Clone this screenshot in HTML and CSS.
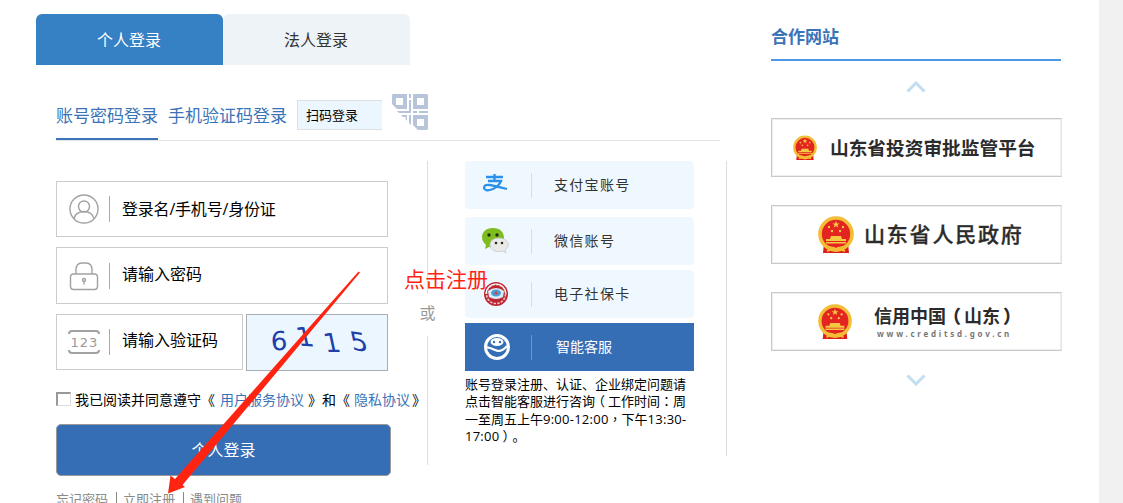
FILE: index.html
```html
<!DOCTYPE html>
<html lang="zh-CN">
<head>
<meta charset="utf-8">
<title>个人登录</title>
<link rel="stylesheet" href="styles.css">
</head>
<body>
<svg width="0" height="0" class="defs">
  <symbol id="emblem" viewBox="0 0 36 38">
    <path d="M6 27h24l1 10H5z" fill="#e01b19"/>
    <circle cx="18" cy="18" r="16" fill="#e42420" stroke="#f3bd36" stroke-width="3.6"/>
    <path d="M18 5l1 2.5h2.6l-2.1 1.6.8 2.6-2.3-1.600-2.300 1.600.8-2.600-2.100-1.600H17z" fill="#f5c842"/>
    <g fill="#f5c842"><circle cx="11" cy="11" r="1.200"/><circle cx="25" cy="11" r="1.200"/><circle cx="14" cy="15" r="1.200"/><circle cx="22" cy="15" r="1.200"/><path d="M13 20h10l1 3h4v2H8v-2h4zM8 26h20v1.500H8z"/></g>
    <path d="M7 29c5 4 7 1 11 4 4-3 6 0 11-4M9 35l5-2 4 2 4-2 5 2" fill="none" stroke="#f3bd36" stroke-width="2"/>
  </symbol>
</svg>
<div class="page">
  <main class="main">
    <div class="tabs"><div class="tab active">个人登录</div><div class="tab">法人登录</div></div>
    <nav class="modes">
      <a class="mode selected">账号密码登录</a><a class="mode">手机验证码登录</a>
      <span class="scan">扫码登录</span>
      <svg class="qr" width="36" height="36" viewBox="0 0 36 36">
        <g fill="#b7c4da"><path fill-rule="evenodd" d="M1 0h14v15H5l-5-5V1zM4 4v7h7V4zM21 0h14l1 1v14H21zM25 4v7h7V4zM21 21h15v14l-1 1H26l-5-5zM25 25v7h7v-7z"/>
        <path d="M17 0h2v4h-2zM17 6h2v13H7l-2-2h12zM21 17h4v2h-4zM27 17h9v2h-9zM9 21h6v2h-4zM13 24l2-1v4zM17 21h2v10l-2-2z"/></g>
      </svg>
    </nav>
    <div class="body">
      <section class="form">
        <div class="field">
          <svg width="30" height="30" viewBox="0 0 30 30" class="line-icon"><circle cx="15" cy="15" r="14"/><circle cx="15" cy="12.5" r="5.5"/><path d="M5 25c1-10 19-10 20 0"/></svg>
          <i class="sep"></i><span>登录名/手机号/身份证</span>
        </div>
        <div class="field pass">
          <svg width="30" height="30" viewBox="0 0 30 30" class="line-icon"><rect x="1.500" y="13" width="27" height="15.500" rx="3"/><path d="M7 13V9q0-7 6-7h4q6 0 6 7v4"/><circle cx="15" cy="19" r="1.500"/><path d="M15 20.500v3"/></svg>
          <i class="sep"></i><span>请输入密码</span>
        </div>
        <div class="row">
          <div class="field code">
            <svg width="32" height="30" viewBox="0 0 32 30" class="line-icon"><path stroke-width="2" d="M1 7q0-3 3-3h24q3 0 3 3M1 23q0 3 3 3h24q3 0 3-3"/><text x="16.500" y="20" text-anchor="middle">123</text></svg>
            <i class="sep"></i><span>请输入验证码</span>
          </div>
          <div class="captcha"><b class="d1">6</b><b class="d2">1</b><b class="d3">1</b><b class="d4">5</b></div>
        </div>
        <div class="agree"><i class="check"></i><span class="pre">我已阅读并同意遵守《</span><a>用户服务协议</a><span class="mid">》和《</span><a>隐私协议</a><span class="post">》</span></div>
        <div class="submit">个人登录</div>
        <div class="links"><span>忘记密码</span><i></i><span>立即注册</span><i></i><span>遇到问题</span></div>
      </section>
      <div class="or"><i class="top"></i><span>或</span><i class="bottom"></i></div>
      <section class="others">
        <div class="way">
          <svg width="30" height="30" viewBox="0 0 30 30" fill="none" stroke="#2b91e8"><path stroke-width="2.300" d="M6 7h17M14.500 4v7M8 11h13q-2 5-8 8-8 3-9-1 0-4 6-3 5 1 17 4"/></svg>
          <i></i><span>支付宝账号</span>
        </div>
        <div class="way gap8">
          <svg width="30" height="30" viewBox="0 0 30 30"><path d="M13 2C5 2 2 7 2 11c0 4 2 6 4 8l-1 4 4-2q14 2 15-9C24 6 20 2 13 2z" fill="#7fbd1e"/><path d="M19 12c-6 0-9 3-9 7 0 5 6 8 13 6l3 2-1-3c7-5 2-12-6-12z" fill="#e9e9e9" stroke="#c4c4c4" stroke-width=".7"/><g fill="#252d18"><circle cx="9" cy="9" r="1.700"/><circle cx="17" cy="9" r="1.700"/><circle cx="16" cy="17" r="1.300"/><circle cx="22" cy="17" r="1.300"/></g></svg>
          <i></i><span>微信账号</span>
        </div>
        <div class="way gap5">
          <svg width="30" height="30" viewBox="0 0 30 30"><circle cx="16" cy="15" r="12" fill="#bd2630"/><circle cx="16" cy="15" r="9.500" fill="none" stroke="#e9bfc3" stroke-width="1.600" stroke-dasharray="2.500 1.200"/><path d="M6 15a10 10 0 0 1 20 0" fill="none" stroke="#fff" stroke-width="1.200"/><path d="M8 12q8-6 16 0l-1 6q-7 4-14 0z" fill="#d9edf8"/><ellipse cx="16" cy="14" rx="5" ry="3.500" fill="#4d9bd0"/><circle cx="16" cy="14" r="1.500" fill="#d43e44"/></svg>
          <i></i><span>电子社保卡</span>
        </div>
        <div class="way service gap5">
          <svg width="30" height="30" viewBox="0 0 30 30"><circle cx="17" cy="15" r="11.500" fill="none" stroke="#fff" stroke-width="3"/><ellipse cx="17" cy="10" rx="6.500" ry="4" fill="#fff"/><path d="M6 15q5 1 9 3 6 3 12-4" fill="none" stroke="#fff" stroke-width="2"/><circle cx="14" cy="10" r="1.200" fill="#366eb5"/><circle cx="20" cy="10" r="1.200" fill="#366eb5"/></svg>
          <i></i><span>智能客服</span>
        </div>
        <p class="note">账号登录注册、认证、企业绑定问题请<br>点击智能客服进行咨询<b class="open">（</b>工作时间<b lang="zh-TW">：</b>周<br>一至周五上午<span class="num">9:00-12:00</span><b lang="zh-TW">，</b>下午<span class="num">13:30-</span><br><span class="num">17:00</span><b class="close">）</b>。</p>
      </section>
    </div>
  </main>
  <aside class="partners">
    <h2>合作网站</h2>
    <svg class="chev" width="20" height="12" viewBox="0 0 20 12"><path d="M1.500 10.500L10 2l8.500 8.500"/></svg>
    <div class="site invest"><svg width="24" height="26"><use href="#emblem"/></svg><span>山东省投资审批监管平台</span></div>
    <div class="site gov"><svg width="36" height="38"><use href="#emblem"/></svg><span>山东省人民政府</span></div>
    <div class="site credit"><svg width="34" height="36"><use href="#emblem"/></svg><div><span>信用中国<b class="open">（</b>山东<b class="close">）</b></span><small>www.creditsd.gov.cn</small></div></div>
    <svg class="chev down" width="20" height="12" viewBox="0 0 20 12"><path d="M1.500 1.500L10 10l8.500-8.500"/></svg>
  </aside>
  <div class="gutter"></div>
  <svg class="pointer" width="1123" height="503"><path d="M168 493.500L170.500 475.500L175 479L358.500 271.500L360 272.500L182.500 485L185 487Z" fill="#ff2412"/></svg>
  <div class="callout">点击注册</div>
</div>
</body>
</html>
```
FILE: styles.css
```css
* { box-sizing: border-box; }
body { margin: 0; background: #fff; font-family: "Noto Sans CJK SC", sans-serif; color: #000; overflow: hidden; }
.defs { display: block; }
.page { position: relative; display: flex; width: 1123px; height: 503px; overflow: hidden; white-space: nowrap; }
.main { width: 771px; padding: 14px 0 0 36px; flex: none; }
.tabs { display: flex; }
.tab { width: 187px; height: 51px; padding-right: 1px; line-height: 50px; text-align: center; font-size: 16px; color: #333; background: #edf3f7; border-radius: 6px 6px 0 0; }
.tab.active { background: #3680c4; color: #fff; }
.modes { display: flex; width: 664px; height: 76px; margin-left: 20px; padding-top: 29px; border-bottom: 1px solid #e3e5e7; }
.mode { height: 46px; line-height: 42px; font-size: 17px; color: #3b73b9; margin-right: 10px; }
.mode.selected { border-bottom: 2px solid #3b73b9; }
.scan { width: 85px; height: 30px; margin-top: 6px; padding-left: 8px; line-height: 27px; font-size: 13px; background: #ebf6ff; border: 1px solid #dce0e4; border-right: 0; }
.qr { margin-left: 10px; }
.body { display: flex; padding: 20px 0 0 20px; }
.form { width: 332px; padding-top: 20px; flex: none; }
.field { display: flex; align-items: center; height: 56px; border: 1px solid #ccc; padding-left: 11px; font-family: "Open Sans", "Noto Sans CJK SC", sans-serif; font-size: 16px; }
.field svg { width: 32px; flex: none; }
.field span { line-height: 24px; }
.field:first-child:not(.code) span { letter-spacing: -0.2px; }
.sep { width: 1px; height: 26px; background: #aaa; margin: 0 12px 0 9px; }
.line-icon { fill: none; stroke: #a2a2a2; stroke-width: 1.4; }
.line-icon text { font: 13px "DejaVu Sans", sans-serif; letter-spacing: 1px; fill: #999; stroke: none; }
.pass { height: 57px; margin-top: 10px; }
.pass span { padding-bottom: 4px; }
.row { display: flex; gap: 3px; margin-top: 10px; }
.code { width: 187px; }
.code span { padding-bottom: 4px; }
.captcha { width: 142px; height: 57px; display: flex; padding: 10px 0 0 24px; gap: 11px; background: #ebf6ff; border: 1px solid #a9adb1; color: #203faa; }
.captcha b { width: 16px; font: 26px/32px "DejaVu Sans", sans-serif; }
.d1 { transform: rotate(-3deg); }
.d2 { transform: translateY(-4px) skewX(17deg) rotate(4deg); }
.d3 { transform: translateY(2px) skewX(12deg); }
.d4 { transform: translateY(1px) skewX(20deg) rotate(8deg); }
.agree { display: flex; align-items: center; height: 22px; margin-top: 17px; font-size: 14px; }
.agree > * { flex: none; }
.agree a { color: #3b73b9; }
.check { width: 15px; height: 14px; border: 2px solid #999; border-right: 1px solid #ddd; border-bottom: 1px solid #ddd; margin-right: 4px; }
.pre { width: 145px; }
.mid { width: 50px; padding-left: 4px; }
.post { padding-left: 2px; }
.submit { width: 335px; height: 52px; margin-top: 14px; line-height: 49px; text-align: center; color: #fff; font-size: 16px; background: #366eb5; border: 1px solid #999; border-radius: 5px; }
.links { display: flex; align-items: center; height: 20px; margin-top: 12px; color: #888; font-size: 13px; }
.links i { width: 1px; height: 13px; background: #888; margin: 0 6px 0 8px; }
.or { width: 17px; margin-left: 31px; display: flex; flex-direction: column; align-items: center; font-size: 16px; color: #999; flex: none; }
.or i { width: 1px; background: #ddd; }
.or .top { height: 133px; }
.or span { height: 42px; line-height: 36px; }
.or .bottom { height: 129px; }
.others { width: 262px; height: 295px; margin-left: 29px; border-right: 1px solid #ddd; flex: none; }
.way { display: flex; align-items: center; width: 229px; height: 48px; padding-left: 15px; border-radius: 4px; background: #f0f8ff; color: #333; font-size: 14px; letter-spacing: 1.3px; }
.way i { width: 1px; height: 25px; background: #cfe2eb; margin: 0 22px 0 21px; }
.way svg { flex: none; }
.way span { padding-bottom: 2px; }
.gap8 { margin-top: 8px; }
.gap5 { margin-top: 5px; }
.service { background: #366eb5; color: #fff; border-radius: 0; letter-spacing: 0; }
.service i { background: #6d96c9; margin-right: 24px; }
.note { margin: 5px 0 0; font-family: "Open Sans", "Noto Sans CJK SC", sans-serif; font-size: 13px; line-height: 17.4px; }
.note b { font-family: "Noto Sans CJK TC", sans-serif; font-weight: 400; line-height: 1; }
.num { letter-spacing: 0.25px; }
.open, .close { display: inline-block; width: 1em; line-height: 1; }
.open { transform: translateX(-3px); }
.close { transform: translateX(3px); }
.partners { width: 291px; padding-top: 24px; flex: none; }
.partners h2 { width: 290px; height: 37px; margin: 0; font-size: 17px; line-height: 24px; color: #3b73b9; border-bottom: 2px solid #4d96e6; }
.chev { display: block; margin: 20px 0 25px 135px; fill: none; stroke: #c1dff0; stroke-width: 3; }
.chev.down { margin: -5px 0 0 135px; }
.site { display: flex; align-items: center; height: 59px; margin-bottom: 28px; border: 1px solid #c9c9c9; border-right-color: #e5e5e5; box-shadow: inset 0 0 0 1px #eee; color: #2b2b2b; font-weight: 700; }
.site svg { flex: none; }
.invest { padding-left: 21px; font-size: 18.7px; }
.invest span { margin-left: 13px; padding-bottom: 3px; }
.gov { padding-left: 46px; font-size: 21px; letter-spacing: 1.8px; font-weight: 500; -webkit-text-stroke: 0.3px #2b2b2b; }
.gov span { margin-left: 10px; padding-bottom: 3px; }
.credit { padding-left: 46px; font-size: 18px; }
.credit div { display: flex; flex-direction: column; margin-left: 22px; padding-bottom: 2px; }
.credit span { line-height: 26px; }
.credit small { font: bold 8px/11px "Noto Sans", sans-serif; color: #777; letter-spacing: 2.75px; padding-left: 3px; }
.gutter { width: 24px; margin-left: 37px; background: #f1f1f1; flex: none; }
.pointer { position: absolute; left: 0; top: 0; }
.callout { position: absolute; left: 404px; top: 263px; font-size: 21px; line-height: 30px; color: #ff2412; }
```
